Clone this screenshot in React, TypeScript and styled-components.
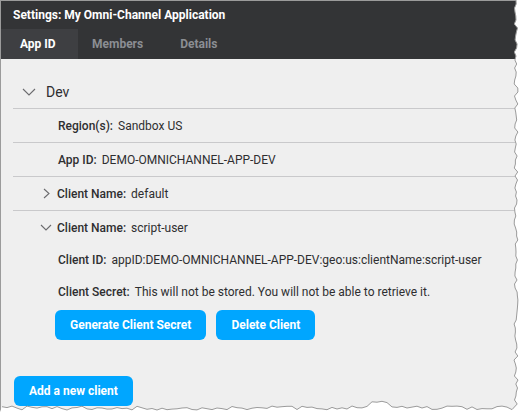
import React from "react";
import styled, { createGlobalStyle } from "styled-components";

const Global = createGlobalStyle`
  html, body {
    margin: 0;
    padding: 0;
    background: #ffffff;
  }
  body {
    font-family: Roboto, "Liberation Sans", Arial, sans-serif;
    -webkit-font-smoothing: antialiased;
  }
`;

const Frame = styled.div`
  position: relative;
  width: 521px;
  height: 412px;
  overflow: hidden;
`;

const Panel = styled.div`
  width: 520px;
  height: 411px;
  border-top: 1px solid #9b9b9b;
  border-left: 1px solid #9b9b9b;
  background: #efefef;
  display: flex;
  flex-direction: column;
`;

const TitleBar = styled.div`
  height: 28px;
  background: #333436;
  color: #ffffff;
  font-size: 12px;
  font-weight: 700;
  display: flex;
  align-items: center;
  padding-left: 12px;
`;

const Tabs = styled.div`
  height: 30px;
  background: #333436;
  display: flex;
`;

const Tab = styled.div<{ $active?: boolean }>`
  padding: ${(p) => (p.$active ? "0 0 0 19px" : "0 23px 0 14px")};
  width: ${(p) => (p.$active ? "58px" : "auto")};
  display: flex;
  align-items: center;
  font-size: 12px;
  font-weight: 700;
  color: ${(p) => (p.$active ? "#ffffff" : "#8b8e93")};
  background: ${(p) => (p.$active ? "#3e3f42" : "transparent")};
`;

const Content = styled.div`
  padding-top: 16px;
  display: flex;
  flex-direction: column;
`;

const Row = styled.div<{ $indent: number; $line?: boolean; $h?: number }>`
  margin-left: 12px;
  height: ${(p) => p.$h ?? 33}px;
  border-bottom: ${(p) => (p.$line ? "1px solid #c9c9cb" : "none")};
  display: flex;
  align-items: center;
  padding-left: ${(p) => p.$indent}px;
  font-size: 12px;
  color: #2e2e30;
`;

const Chevron = styled.svg`
  flex: none;
  display: block;
`;

const Spacer = styled.span<{ $w: number }>`
  flex: none;
  width: ${(p) => p.$w}px;
`;

const GroupTitle = styled.span`
  font-size: 14px;
  color: #2e2e30;
`;

const Label = styled.span`
  font-weight: 500;
  margin-right: 5px;
`;

const Value = styled.span`
  font-weight: 400;
`;

const ButtonRow = styled.div<{ $left: number; $top: number }>`
  display: flex;
  gap: 10px;
  padding-left: ${(p) => p.$left}px;
  margin-top: ${(p) => p.$top}px;
`;

const Button = styled.button`
  height: 30px;
  border: none;
  border-radius: 6px;
  background: #00a6ff;
  color: #ffffff;
  font-family: Roboto, "Liberation Sans", Arial, sans-serif;
  font-size: 12px;
  font-weight: 700;
  padding: 0 15px;
  cursor: pointer;
`;

const TornEdge = styled.svg`
  position: absolute;
  left: 0;
  top: 0;
  pointer-events: none;
`;

function rng(seed: number) {
  let s = seed;
  return () => {
    s = (s * 9301 + 49297) % 233280;
    return s / 233280;
  };
}

function tornPath() {
  const r = rng(7);
  const pts: string[] = [];
  // right edge, top to bottom
  for (let y = 0; y <= 404; y += 4) {
    const x = 514 + r() * 4;
    pts.push(`${x.toFixed(1)},${y}`);
  }
  // bottom edge, right to left
  for (let x = 512; x >= 0; x -= 5) {
    let y = 406 + r() * 4;
    if (x > 370 && x < 390) y = 401 + r() * 2;
    pts.push(`${x},${y.toFixed(1)}`);
  }
  return pts;
}

function DownChevron({ w, h }: { w: number; h: number }) {
  return (
    <Chevron width={w + 2} height={h + 2} viewBox={`-1 -1 ${w + 2} ${h + 2}`}>
      <polyline
        points={`0,0 ${w / 2},${h} ${w},0`}
        fill="none"
        stroke="#6b6b6e"
        strokeWidth="1.1"
      />
    </Chevron>
  );
}

function RightChevron() {
  return (
    <Chevron width={7} height={11} viewBox="-1 -1 7 11">
      <polyline points="0,0 5,4.5 0,9" fill="none" stroke="#6b6b6e" strokeWidth="1.1" />
    </Chevron>
  );
}

export default function App() {
  const pts = tornPath();
  const edge = pts.join(" ");
  const fillPts = `521,0 ${edge} 0,412 521,412`;

  return (
    <Frame>
      <Global />
      <Panel>
        <TitleBar>Settings: My Omni-Channel Application</TitleBar>
        <Tabs>
          <Tab $active>App ID</Tab>
          <Tab>Members</Tab>
          <Tab>Details</Tab>
        </Tabs>
        <Content>
          <Row $indent={9} $line>
            <DownChevron w={12} h={6} />
            <Spacer $w={10} />
            <GroupTitle>Dev</GroupTitle>
          </Row>
          <Row $indent={45} $line>
            <Label>Region(s):</Label>
            <Value>Sandbox US</Value>
          </Row>
          <Row $indent={45} $line>
            <Label>App ID:</Label>
            <Value>DEMO-OMNICHANNEL-APP-DEV</Value>
          </Row>
          <Row $indent={30} $line>
            <RightChevron />
            <Spacer $w={7} />
            <Label>Client Name:</Label>
            <Value>default</Value>
          </Row>
          <Row $indent={27}>
            <DownChevron w={10} h={5} />
            <Spacer $w={5} />
            <Label>Client Name:</Label>
            <Value>script-user</Value>
          </Row>
          <Row $indent={45} $h={32}>
            <Label>Client ID:</Label>
            <Value>appID:DEMO-OMNICHANNEL-APP-DEV:geo:us:clientName:script-user</Value>
          </Row>
          <Row $indent={45} $h={32}>
            <Label>Client Secret:</Label>
            <Value>This will not be stored. You will not be able to retrieve it.</Value>
          </Row>
          <ButtonRow $left={54} $top={2}>
            <Button>Generate Client Secret</Button>
            <Button>Delete Client</Button>
          </ButtonRow>
          <ButtonRow $left={13} $top={36}>
            <Button>Add a new client</Button>
          </ButtonRow>
        </Content>
      </Panel>
      <TornEdge width={521} height={412} viewBox="0 0 521 412">
        <polygon points={fillPts} fill="#ffffff" />
        <polyline points={edge} fill="none" stroke="#9b9b9b" strokeWidth="1" />
      </TornEdge>
    </Frame>
  );
}
